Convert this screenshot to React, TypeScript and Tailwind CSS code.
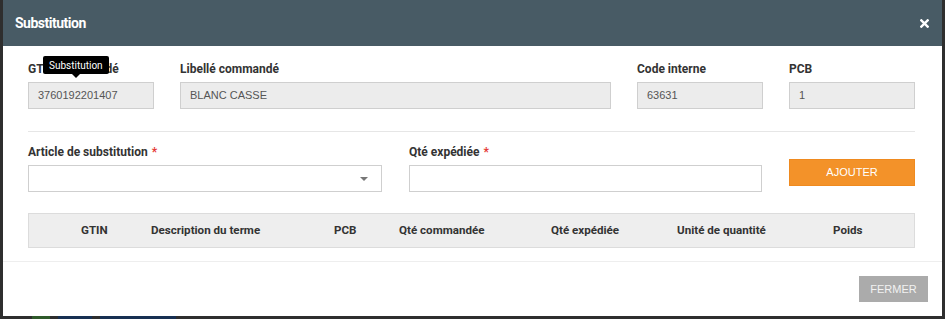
import React from "react";

const label = "h-[16px] flex items-center text-[12px] font-bold text-[#333] font-['Roboto',sans-serif]";
const readonlyInput =
    "h-[27px] flex items-center px-[9px] bg-[#ececec] border border-[#cfcfcf] text-[11px] text-[#555] font-['Liberation_Sans',Arial,sans-serif]";

const Field: React.FC<{ title: string; value: string; width: string; tooltip?: boolean }> = ({
    title,
    value,
    width,
    tooltip,
}) => (
    <div className={`flex flex-col ${width}`}>
        <div className="relative">
            <div className={label}>{title}</div>
            {tooltip && (
                <div className="absolute left-[15px] top-[-5px] flex flex-col items-center">
                    <div className="h-[18px] px-[6px] flex items-center bg-black text-white text-[10px] font-['Roboto',sans-serif] rounded-[2px]">
                        Substitution
                    </div>
                    <div className="w-0 h-0 border-l-[4px] border-r-[4px] border-t-[4px] border-l-transparent border-r-transparent border-t-black" />
                </div>
            )}
        </div>
        <div className={`mt-[5px] ${readonlyInput}`}>{value}</div>
    </div>
);

const COLUMNS = ["GTIN", "Description du terme", "PCB", "Qté commandée", "Qté expédiée", "Unité de quantité", "Poids"];

export default function App() {
    return (
        <div className="w-[945px] h-[319px] bg-[#2e2e2e] flex flex-col overflow-hidden">
            <div className="ml-[3px] w-[939px] bg-white flex flex-col">
                {/* Header */}
                <div className="h-[46px] bg-[#485b65] flex items-center justify-between pl-[12px] pr-[13px]">
                    <span className="text-white text-[14px] font-bold tracking-[-0.5px] font-['Roboto',sans-serif]">
                        Substitution
                    </span>
                    <svg width="9" height="9" viewBox="0 0 10 10" className="mt-[1px]">
                        <path d="M1.5 1.5 L8.5 8.5 M8.5 1.5 L1.5 8.5" stroke="white" strokeWidth="2.6" strokeLinecap="square" />
                    </svg>
                </div>

                {/* Body */}
                <div className="pl-[25px] pr-[27px] flex flex-col">
                    <div className="flex gap-[26px] mt-[15px]">
                        <Field title="GTIN commandé" value="3760192201407" width="w-[126px]" tooltip />
                        <Field title="Libellé commandé" value="BLANC CASSE" width="w-[431px]" />
                        <Field title="Code interne" value="63631" width="w-[126px]" />
                        <Field title="PCB" value="1" width="w-[126px]" />
                    </div>

                    <div className="mt-[22px] border-t border-[#e6e6e6]" />

                    <div className="flex gap-[27px] mt-[12px]">
                        <div className="flex flex-col w-[354px]">
                            <div className={label}>
                                Article de substitution<span className="text-[#e53935] ml-[4px]">*</span>
                            </div>
                            <div className="mt-[5px] h-[27px] border border-[#cfcfcf] bg-white flex items-center justify-end pr-[13px]">
                                <div className="w-0 h-0 border-l-[4px] border-r-[4px] border-t-[4px] border-l-transparent border-r-transparent border-t-[#777]" />
                            </div>
                        </div>
                        <div className="flex flex-col w-[353px]">
                            <div className={label}>
                                Qté expédiée<span className="text-[#e53935] ml-[4px]">*</span>
                            </div>
                            <div className="mt-[5px] h-[27px] border border-[#cfcfcf] bg-white" />
                        </div>
                        <div className="w-[126px] mt-[15px]">
                            <div className="h-[27px] bg-[#f39229] border border-[#ef8a1f] flex items-center justify-center text-white text-[11px] font-['Liberation_Sans',Arial,sans-serif]">
                                AJOUTER
                            </div>
                        </div>
                    </div>

                    <div className="mt-[21px] h-[35px] bg-[#eeeeee] border border-[#dcdcdc] grid grid-cols-[52px_70px_183px_65px_152px_126px_156px_1fr] items-center text-[11.6px] font-bold text-[#333] font-['Roboto',sans-serif]">
                        <div />
                        {COLUMNS.map((c) => (
                            <div key={c} className="whitespace-nowrap">
                                {c}
                            </div>
                        ))}
                    </div>
                </div>

                {/* Footer */}
                <div className="mt-[13px] border-t border-[#eeeeee] flex justify-end pr-[14px] pt-[14px] pb-[14px]">
                    <div className="w-[69px] h-[26px] bg-[#ababab] flex items-center justify-center text-[#f2f2f2] text-[11px] font-['Liberation_Sans',Arial,sans-serif]">
                        FERMER
                    </div>
                </div>
            </div>

            {/* Background behind modal */}
            <div className="flex h-[3px] gap-[8px] pl-[32px] mt-0">
                <div className="w-[18px] bg-[#2f5a2a]" />
                <div className="w-[34px] bg-[#173052]" />
                <div className="w-[76px] bg-[#173052]" />
            </div>
        </div>
    );
}
